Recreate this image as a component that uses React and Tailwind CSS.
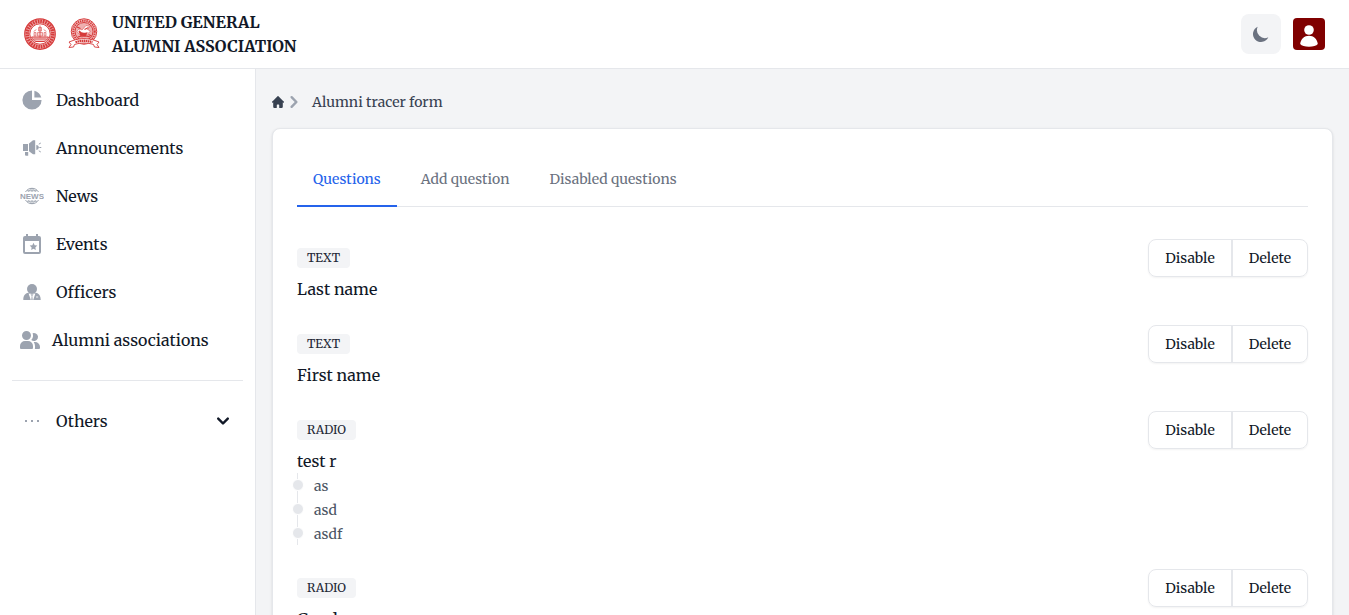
import { HiChartPie, HiChevronDown, HiChevronRight, HiMoon } from "react-icons/hi";

function UniversitySeal() {
  return (
    <svg viewBox="0 0 64 64" className="size-8 text-[#d63a3a]" fill="none" stroke="currentColor" aria-hidden="true">
      <circle cx="32" cy="32" r="30.5" strokeWidth="2.5" />
      <circle cx="32" cy="32" r="25.5" strokeWidth="8" opacity="0.45" />
      <circle cx="32" cy="32" r="25.5" strokeWidth="7" strokeDasharray="3.2 1.8" />
      <circle cx="32" cy="32" r="20.5" strokeWidth="2" />
      <path d="M32 15v24M20 27l4-4M44 27l-4-4" strokeWidth="1.5" />
      <path d="M29 19h6v7h-6zM27 29h10v7H27zM20 29h4v7h-4zM40 29h4v7h-4z" strokeWidth="1" fill="currentColor" fillOpacity="0.2" />
      <path d="M15 38h34c-2 5-5 8-9 9H24c-4-1-7-4-9-9Z" strokeWidth="2" fill="currentColor" fillOpacity="0.3" />
      <path d="M19 42h26" strokeWidth="1.5" />
    </svg>
  );
}

function AlumniSeal() {
  return (
    <svg viewBox="0 0 64 64" className="size-8 text-[#d63a3a]" fill="none" stroke="currentColor" aria-hidden="true">
      <circle cx="32" cy="27" r="25.5" strokeWidth="2" />
      <circle cx="32" cy="27" r="21.5" strokeWidth="6" opacity="0.35" />
      <circle cx="32" cy="27" r="21.5" strokeWidth="4" strokeDasharray="2.6 1.8" />
      <circle cx="32" cy="27" r="18" strokeWidth="2" fill="currentColor" fillOpacity="0.4" />
      <path d="M18 27c2-5 6-6 10-3l8-9 8 2-5 6 6 3-6 6-7 1-4 6-4-5Z" strokeWidth="1" fill="white" />
      <path d="M22 26c4 5 9 6 15 4l-3 6-8-1ZM33 23l8-4" strokeWidth="2.5" fill="currentColor" />
      <path d="M18 18l7 3M41 33l6 3M20 38c8-3 16-3 24 0" strokeWidth="2.5" />
      <path
        d="M10 45c15-5 29-5 44 0l8 3-4 5 4 6-9-1-2-5c-13-4-25-4-38 0l-2 5-9 1 4-6-4-5 8-3Z"
        fill="white"
        strokeWidth="1.8"
      />
      <path d="M15 48.500c11-4 23-4 34 0" strokeWidth="4.500" strokeDasharray="3.200 0.900" />
    </svg>
  );
}

function MegaphoneIcon() {
  return (
    <svg viewBox="0 0 24 24" className="size-6" fill="currentColor" aria-hidden="true">
      <path d="M3 8h5v7H3zM5 16h3.200v3.800H6a1 1 0 0 1-1-1zM9 7.500 13 4.300h2.200v14h-2.200L9 15.200z" />
      <path d="M16.300 9v5a2.500 2.500 0 0 0 0-5Z" />
      <path d="M18.800 8.200 20.800 7M19.300 11.500h2M18.800 14.800l2 1.200" fill="none" stroke="currentColor" strokeWidth="1" />
    </svg>
  );
}

function NewsIcon() {
  return (
    <svg viewBox="0 0 24 24" className="size-6" fill="none" stroke="currentColor" aria-hidden="true">
      <path d="M5.500 8C7 5.500 9.300 4.300 12 4.300S17 5.500 18.500 8M5.500 16c1.500 2.500 3.800 3.700 6.500 3.700s5-1.200 6.500-3.700" strokeWidth="1" />
      <path d="M12 4.300V8M12 16v3.700M8.500 8c.7-1.800 1.800-3 3.500-3.700 1.700.7 2.800 1.900 3.500 3.700M8.500 16c.7 1.800 1.800 3 3.500 3.700 1.700-.7 2.800-1.900 3.500-3.700M7 6.700h10M7 17.300h10" strokeWidth="0.8" />
      <text x="12" y="15" textAnchor="middle" fill="currentColor" stroke="none" fontFamily="Liberation Sans, sans-serif" fontWeight="700" fontSize="8">
        NEWS
      </text>
    </svg>
  );
}

function CalendarStarIcon() {
  return (
    <svg viewBox="0 0 24 24" className="size-6" fill="currentColor" aria-hidden="true">
      <path
        fillRule="evenodd"
        d="M6 2h2v2h8V2h2v2h1a2 2 0 0 1 2 2v14a2 2 0 0 1-2 2H5a2 2 0 0 1-2-2V6a2 2 0 0 1 2-2h1ZM5 9v11h14V9Z"
      />
      <path d="m13.500 10.800 1.150 2.400 2.650.35-1.950 1.850.5 2.600-2.350-1.250L11.150 18l.5-2.600-1.950-1.850 2.650-.35Z" />
    </svg>
  );
}

function OfficerIcon() {
  return (
    <svg viewBox="0 0 24 24" className="size-6" fill="currentColor" aria-hidden="true">
      <circle cx="12" cy="9" r="5" />
      <path d="M3.300 20c0-4.500 1.700-6.500 5-7.300L12 14.500l3.700-1.800c3.300.8 5 2.800 5 7.300Z" />
      <path d="M8.600 13.500l2.200 6.500h.5l.4-4-.7-1.300h2l-.7 1.300.4 4h.5l2.200-6.500-3.400 1.200Z" fill="white" />
      <path d="M16 17h2.200" stroke="white" strokeWidth="0.800" />
    </svg>
  );
}

function UsersIcon() {
  return (
    <svg viewBox="0 0 20 18" className="w-5" fill="currentColor" aria-hidden="true">
      <path d="M14 2a3.963 3.963 0 0 0-1.4.267 6.439 6.439 0 0 1-1.331 6.638A4 4 0 1 0 14 2Zm1 9h-1.264A6.957 6.957 0 0 1 15 15v2a2.970 2.970 0 0 1-.184 1H19a1 1 0 0 0 1-1v-1a5.006 5.006 0 0 0-5-5ZM6.500 9a4.500 4.500 0 1 0 0-9 4.500 4.500 0 0 0 0 9ZM8 10H5a5.006 5.006 0 0 0-5 5v2a1 1 0 0 0 1 1h11a1 1 0 0 0 1-1v-2a5.006 5.006 0 0 0-5-5Z" />
    </svg>
  );
}

function DotsIcon() {
  return (
    <svg viewBox="0 0 24 24" className="size-6" fill="currentColor" aria-hidden="true">
      <path d="M5 11h2v2H5zM11 11h2v2h-2zM17 11h2v2h-2z" />
    </svg>
  );
}

function HomeIcon() {
  return (
    <svg viewBox="0 0 20 20" className="size-3" fill="currentColor" aria-hidden="true">
      <path d="m19.707 9.293-2-2-7-7a1 1 0 0 0-1.414 0l-7 7-2 2a1 1 0 0 0 1.414 1.414L2 10.414V18a2 2 0 0 0 2 2h3a1 1 0 0 0 1-1v-4a1 1 0 0 1 1-1h2a1 1 0 0 1 1 1v4a1 1 0 0 0 1 1h3a2 2 0 0 0 2-2v-7.586l.293.293a1 1 0 0 0 1.414-1.414Z" />
    </svg>
  );
}

const navItems = [
  { label: "Dashboard", icon: <HiChartPie className="size-6" /> },
  { label: "Announcements", icon: <MegaphoneIcon /> },
  { label: "News", icon: <NewsIcon /> },
  { label: "Events", icon: <CalendarStarIcon /> },
  { label: "Officers", icon: <OfficerIcon /> },
  { label: "Alumni associations", icon: <UsersIcon /> },
];

const tabs = ["Questions", "Add question", "Disabled questions"];

const questions = [
  { type: "TEXT", name: "Last name", options: [] },
  { type: "TEXT", name: "First name", options: [] },
  { type: "RADIO", name: "test r", options: ["as", "asd", "asdf"] },
  { type: "RADIO", name: "Gender", options: [] },
];

function Header() {
  return (
    <header className="flex shrink-0 items-center justify-between border-b border-[#e5e7eb] bg-white px-6 py-[10px]">
      <a href="#home" className="flex items-center gap-3">
        <UniversitySeal />
        <AlumniSeal />
        <span className="text-[16px] leading-6 font-bold">
          UNITED GENERAL
          <br />
          ALUMNI ASSOCIATION
        </span>
      </a>
      <div className="flex items-center gap-3">
        <button type="button" aria-label="Toggle dark mode" className="rounded-lg bg-[#f3f4f6] p-[10px] text-[#6b7280]">
          <HiMoon className="size-5" />
        </button>
        <button type="button" aria-label="Account" className="size-8 overflow-hidden rounded bg-[#800000]">
          <svg viewBox="0 0 32 32" className="size-8" fill="white" aria-hidden="true">
            <circle cx="16" cy="12" r="4.800" />
            <path d="M7.200 26c.4-5 4.200-8.300 8.800-8.300s8.400 3.300 8.800 8.300c-1.300 1.800-4.800 2.700-8.800 2.700s-7.500-.9-8.800-2.700Z" />
          </svg>
        </button>
      </div>
    </header>
  );
}

function Sidebar() {
  return (
    <aside className="w-64 shrink-0 border-r border-[#e5e7eb] bg-white px-3 py-[11px]">
      <nav>
        <ul className="flex flex-col gap-2">
          {navItems.map((item) => (
            <li key={item.label}>
              <a href="#section" className="flex h-10 items-center gap-3 px-2 text-[16px] leading-6">
                <span className="text-[#9ca3af]">{item.icon}</span>
                {item.label}
              </a>
            </li>
          ))}
        </ul>
        <div className="mt-5 border-t border-[#e5e7eb] pt-5">
          <button type="button" className="flex h-10 w-full items-center gap-3 px-2 text-[16px] leading-6">
            <span className="text-[#9ca3af]">
              <DotsIcon />
            </span>
            <span className="flex-1 text-left">Others</span>
            <HiChevronDown className="size-6" />
          </button>
        </div>
      </nav>
    </aside>
  );
}

function Question({ type, name, options }) {
  return (
    <li>
      <div className="flex items-center justify-between">
        <span className="rounded bg-[#f3f4f6] px-[10px] py-0.5 text-[12px] leading-4 text-[#1f2937]">{type}</span>
        <div className="flex divide-x-2 divide-[#e5e7eb] rounded-lg border border-[#e5e7eb] text-[14px] leading-5 shadow-xs">
          <button type="button" className="px-4 py-2">
            Disable
          </button>
          <button type="button" className="px-4 py-2">
            Delete
          </button>
        </div>
      </div>
      <h3 className="text-[16px] leading-6">{name}</h3>
      {options.length > 0 && (
        <ul className="border-l border-[#e5e7eb] text-[16px] leading-6 text-[#4b5563]">
          {options.map((option) => (
            <li key={option} className="relative h-6 pl-4">
              <span className="absolute top-[6px] -left-[6px] size-3 rounded-full border border-white bg-[#e5e7eb]" />
              <span className="text-[14px]">{option}</span>
            </li>
          ))}
        </ul>
      )}
    </li>
  );
}

export default function App() {
  return (
    <div className="flex h-screen flex-col overflow-hidden bg-[#f3f4f6] font-['Merriweather','DejaVu_Serif_Condensed','DejaVu_Serif',serif] text-[#111827]">
      <Header />
      <div className="flex min-h-0 flex-1">
        <Sidebar />
        <main className="min-w-0 flex-1 overflow-y-auto p-4 [scrollbar-width:none]">
          <nav aria-label="Breadcrumb" className="flex h-[34px] items-center text-[#374151]">
            <a href="#home" aria-label="Home">
              <HomeIcon />
            </a>
            <HiChevronRight className="-ml-0.5 size-6 text-[#9ca3af]" />
            <span className="ml-1.5 text-[14px] leading-5">Alumni tracer form</span>
          </nav>
          <section className="mt-[9px] rounded-lg border border-[#e5e7eb] bg-white p-6 shadow-sm">
            <div role="tablist" className="flex gap-2 border-b border-[#e5e7eb] text-[14px] leading-5">
              {tabs.map((tab, index) => (
                <button
                  key={tab}
                  type="button"
                  role="tab"
                  aria-selected={index === 0}
                  className={
                    index === 0
                      ? "-mb-px border-b-2 border-[#2563eb] p-4 text-[#2563eb]"
                      : "-mb-px border-b-2 border-transparent p-4 text-[#6b7280]"
                  }
                >
                  {tab}
                </button>
              ))}
            </div>
            <ul className="mt-8 flex flex-col gap-6">
              {questions.map((question) => (
                <Question key={question.name} {...question} />
              ))}
            </ul>
          </section>
        </main>
      </div>
    </div>
  );
}
